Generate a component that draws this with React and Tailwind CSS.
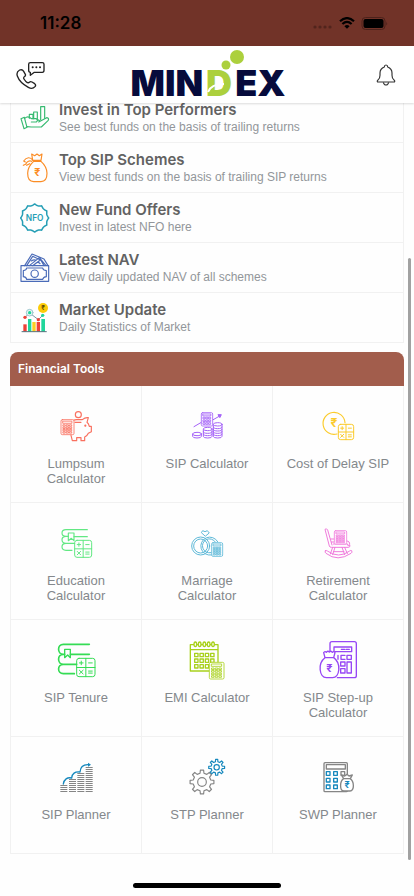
import React from "react";

// small calculator with a display and a 3x4 key grid
function Calc({ x, y, w, h, keys = 4, fill = "white" }) {
    const stepX = w / 4;
    const stepY = (h * 0.62) / keys;
    const dots = [];
    for (let r = 0; r < keys; r++) {
        for (let c = 0; c < 3; c++) {
            dots.push(
                <rect key={r + "-" + c} x={x + stepX * (c + 0.7)} y={y + h * 0.34 + stepY * r} width={stepX * 0.6} height={stepY * 0.6} />
            );
        }
    }
    return (
        <g strokeWidth="2.5">
            <rect x={x} y={y} width={w} height={h} rx="4" fill={fill} />
            <rect x={x + w * 0.16} y={y + h * 0.1} width={w * 0.68} height={h * 0.14} />
            {dots}
        </g>
    );
}

// square pad with + - x = keys
function MathPad({ x, y, s }) {
    const q = s / 4;
    const d = s * 0.1;
    return (
        <g strokeWidth="3">
            <rect x={x} y={y} width={s} height={s} rx="7" />
            <path d={`M${x + 2 * q} ${y}v${s}M${x} ${y + 2 * q}h${s}`} />
            <path d={`M${x + q - d} ${y + q}h${2 * d}M${x + q} ${y + q - d}v${2 * d}M${x + 3 * q - d} ${y + q}h${2 * d}`} />
            <path d={`M${x + q - d} ${y + 3 * q - d}l${2 * d} ${2 * d}m0 ${-2 * d}l${-2 * d} ${2 * d}`} />
            <path d={`M${x + 3 * q - d} ${y + 3 * q - 3}h${2 * d}m0 6h${-2 * d}`} />
        </g>
    );
}

function Rupee({ x, y, size, color }) {
    return (
        <text x={x} y={y} fontSize={size} fill={color || "currentColor"} stroke="none" textAnchor="middle" fontWeight="700" fontFamily="Inter, 'Noto Sans', sans-serif">₹</text>
    );
}

function gearPath(cx, cy, outer, inner, teeth) {
    const step = (Math.PI * 2) / teeth;
    const pts = [];
    for (let i = 0; i < teeth; i++) {
        const a = i * step - Math.PI / 2;
        [[-0.28, inner], [-0.17, outer], [0.17, outer], [0.28, inner]].forEach(([k, r]) => {
            pts.push(`${(cx + r * Math.cos(a + k * step)).toFixed(1)} ${(cy + r * Math.sin(a + k * step)).toFixed(1)}`);
        });
    }
    return "M" + pts.join("L") + "Z";
}

function badgePath(cx, cy, r, waves) {
    const pts = [];
    for (let i = 0; i < 120; i++) {
        const a = (i / 120) * Math.PI * 2;
        const rr = r - 4 * Math.abs(Math.sin((a * waves) / 2));
        pts.push(`${(cx + rr * Math.sin(a)).toFixed(1)} ${(cy - rr * Math.cos(a)).toFixed(1)}`);
    }
    return "M" + pts.join("L") + "Z";
}

const investIcon = (
    <>
        <path d="M28 46V34h11v13M41 47V27h11v22M62 50V11h12v35" />
        <path d="M3 47l10-4 8 30-9 4z" />
        <path d="M14 46c7-6 14-5 20 1h15q7 5 0 10H34M56 57l24-13q9 2 4 9L64 72H34l-13-1M52 50q6 1 8 5" />
    </>
);

const bagIcon = (
    <>
        <path d="M38 22L35 3l9 5 7-5 7 5 8-5-3 19z" />
        <path d="M41 25c-9 8-18 21-18 36 0 16 7 25 18 25h22c11 0 18-9 18-25 0-15-9-28-18-36z" />
        <path d="M38 21c-6-9-18-10-27 3M35 25c-6-4-14 0-18 9l-7 3M11 24l5 3M29 32l-9 5" />
        <Rupee x={52} y={68} size={32} />
    </>
);

const nfoIcon = (
    <>
        <path d={badgePath(44, 45, 42, 12)} strokeWidth="4.5" />
        <text x="44" y="54" fontSize="25" fill="currentColor" stroke="none" textAnchor="middle" fontWeight="600" fontFamily="Inter, sans-serif">NFO</text>
    </>
);

const navIcon = (
    <>
        <rect x="3" y="38" width="83" height="47" />
        <path d="M20 45h48q1 7 11 8v18q-9 1-11 8H20q-1-7-10-8V53q9-1 10-8z" />
        <circle cx="44" cy="62" r="11" />
        <path d="M14 38L36 3l36 15 12 20M20 38l18-28 25 12M28 38l30-24 20 24M38 38l24-18 10 18M34 24q8-6 14-2M48 30q7-4 12 2" />
    </>
);

const marketIcon = (
    <g stroke="none">
        <rect x="10" y="64" width="10" height="22" fill="#ee4136" />
        <rect x="24" y="48" width="10" height="38" fill="#20d69b" />
        <rect x="37" y="57" width="10" height="29" fill="#f9cf23" />
        <rect x="50" y="57" width="10" height="29" fill="#ee4136" />
        <rect x="64" y="48" width="11" height="38" fill="#20d69b" />
        <path d="M6 86h73" stroke="#56707c" strokeWidth="3" />
        <path d="M15 43l14-13 26 20 13-13" stroke="#7d98a5" strokeWidth="3" />
        <circle cx="29" cy="29" r="10" stroke="#9cc6cf" strokeWidth="3" fill="#e7f7f4" />
        <circle cx="29" cy="29" r="5" fill="#20d69b" />
        <circle cx="15" cy="43" r="5" fill="#ee4136" />
        <circle cx="55" cy="50" r="5" fill="#ee4136" />
        <circle cx="68" cy="37" r="5" fill="#20d69b" />
        <circle cx="69" cy="15" r="15" fill="#fccb08" />
        <Rupee x={69} y={22} size={19} color="#614d05" />
    </g>
);

const lumpsumIcon = (
    <>
        <circle cx="67" cy="26" r="9" />
        <path d="M53 43q3-2 9-2h17c7-6 12-7 18-6l-4 14c4 3 6 8 7 12h6v16l-9 5c-2 5-6 9-11 11v11H75v-9H62v9H49l-4-16M57 49h18" />
        <circle cx="88" cy="59" r="1.5" fill="currentColor" />
        <Calc x={15} y={41} w={39} h={45} />
    </>
);

const sipIcon = (
    <g strokeWidth="3">
        <path d="M21 62l22-13M77 42l21-12" />
        <path d="M94 26l9 0-4 8z" fill="currentColor" />
        <Calc x={43} y={20} w={34} h={40} keys={3} />
        <ellipse cx="30" cy="84" rx="13" ry="5" fill="white" />
        <path d="M17 84v7q0 5 13 5t13-5v-7" />
        <path d="M49 70v21q0 5 13 5t13-5V70M49 77q0 5 13 5t13-5M49 84q0 5 13 5t13-5" fill="white" />
        <ellipse cx="62" cy="69" rx="13" ry="5" fill="white" />
        <path d="M79 55v36q0 5 13 5t13-5V55M79 63q0 5 13 5t13-5M79 70q0 5 13 5t13-5M79 77q0 5 13 5t13-5M79 84q0 5 13 5t13-5" fill="white" />
        <ellipse cx="92" cy="55" rx="13" ry="5" fill="white" />
    </g>
);

const delayIcon = (
    <>
        <path d="M57 84A33 33 0 1 1 81 50" />
        <Rupee x={48} y={64} size={36} />
        <MathPad x={61} y={55} s={46} />
    </>
);

const educationIcon = (
    <>
        <path d="M94 20H30c-16 0-16 20 0 20h7M54 41h40M30 40c-16 0-16 21 0 21h26M30 61c-16 0-16 21 0 21h18" />
        <path d="M37 30h17v23l-8-7-9 7z" />
        <MathPad x={56} y={52} s={51} />
    </>
);

const marriageIcon = (
    <g strokeWidth="3">
        <circle cx="41" cy="69" r="27" />
        <circle cx="41" cy="69" r="21" />
        <path d="M73 96A27 27 0 1 1 92 56M72 89A21 21 0 1 1 85 57" />
        <path d="M54 39L43 29l4-6 7 3 7-3 5 6z" />
        <Calc x={74} y={59} w={33} h={41} />
    </g>
);

const retirementIcon = (
    <g strokeWidth="3">
        <path d="M42 66L29 21q-3-6-8-2l13 50q1 4 6 4h50q7 0 6-6l-7 0v-4H46" />
        <path d="M86 54q10 0 9 10M38 48h10M40 57h8" />
        <Calc x={49} y={23} w={37} h={40} />
        <path d="M44 73l-7 20M51 73l-7 22M72 73l8 22M80 73l8 19M46 86h32" />
        <path d="M22 83q-3 5 2 8 35 27 75 0 5-3 2-8-2-2-6 1-33 24-67 0-4-3-6-1z" />
    </g>
);

const tenureIcon = (
    <>
        <path d="M100 13H22c-19 0-19 30 0 30h4M43 43h57M22 43c-19 0-19 30 0 30h40M22 73c-19 0-19 28 0 28h33" strokeWidth="5" />
        <path d="M26 28h17v25l-8-8-9 8z" strokeWidth="4" />
        <MathPad x={62} y={55} s={55} />
    </>
);

const emiIcon = (
    <g strokeWidth="4">
        <path d="M66 93H10V14h83v54M10 29h83" />
        {[25, 38, 52, 65, 78].map((x) => (
            <ellipse key={x} cx={x} cy="13" rx="4" ry="7" fill="white" />
        ))}
        {[40, 57, 74].map((y) =>
            [23, 39, 55, 71].map((x) => <rect key={x + "-" + y} x={x} y={y} width="10" height="10" />)
        )}
        <Calc x={67} y={67} w={44} h={50} />
    </g>
);

const stepUpIcon = (
    <g strokeWidth="4">
        <path d="M36 32V11q0-6 6-6h67q6 0 6 6v96q0 6-6 6H58" />
        <rect x="48" y="21" width="53" height="14" />
        <path d="M70 28h10M84 28h10M60 46v12M81 46H69v12h12" />
        <rect x="87" y="46" width="13" height="12" />
        <rect x="68" y="66" width="13" height="12" />
        <rect x="68" y="86" width="13" height="13" />
        <rect x="87" y="66" width="13" height="33" />
        <path d="M21 53L17 38q4-6 8-1 4-6 9-1 5-5 9 1 5-5 8 1l-4 15z" fill="white" />
        <path d="M21 53C-2 70 4 113 25 113h19c21 0 27-43 3-60z" fill="white" />
        <Rupee x={34} y={97} size={33} />
    </g>
);

const sipPlannerIcon = (
    <>
        {[[13, 84], [39, 67], [64, 48], [89, 30]].map(([x, top]) => {
            const lines = [];
            for (let y = 103.5; y >= top; y -= 6) lines.push(`M${x} ${y}h21`);
            return <path key={x} d={lines.join("")} strokeWidth="3.5" strokeLinecap="butt" />;
        })}
        <path d="M22 81c2-14 12-21 25-18 1-13 10-20 25-18 1-14 10-23 26-22" stroke="#1688bd" strokeWidth="4" />
        <path d="M96 17l9 6-9 6z" stroke="none" fill="#1688bd" />
    </>
);

const stpIcon = (
    <g strokeWidth="3.5">
        <path d={gearPath(45, 75, 36, 27, 8)} />
        <circle cx="45" cy="75" r="13" />
        <g stroke="#1688bd">
            <path d={gearPath(89, 31, 24, 17, 8)} />
            <circle cx="89" cy="31" r="8" />
        </g>
    </g>
);

const swpIcon = (
    <g strokeWidth="4">
        <rect x="18" y="17" width="70" height="87" rx="3" />
        <rect x="25" y="23" width="57" height="13" />
        <g stroke="#1688bd">
            {[44, 64, 84].map((y) =>
                [25, 47].map((x) => <rect key={x + "-" + y} x={x} y={y} width="11" height="11" />)
            )}
        </g>
        <rect x="69" y="44" width="11" height="11" />
        <path d="M77 65l-7-11 10 3 7-5 6 5 10-3-6 11z" fill="white" />
        <path d="M77 65C65 72 64 102 78 102h18c14 0 13-30 0-37z" fill="white" />
        <Rupee x={87} y={94} size={27} color="#1688bd" />
    </g>
);

const menu = [
    { title: "Invest in Top Performers", text: "See best funds on the basis of trailing returns", color: "text-[#36ba70]", icon: investIcon },
    { title: "Top SIP Schemes", text: "View best funds on the basis of trailing SIP returns", color: "text-[#fb8c24]", icon: bagIcon },
    { title: "New Fund Offers", text: "Invest in latest NFO here", color: "text-[#259eb5]", icon: nfoIcon },
    { title: "Latest NAV", text: "View daily updated NAV of all schemes", color: "text-[#4a6bb8]", icon: navIcon },
    { title: "Market Update", text: "Daily Statistics of Market", color: "text-[#56707c]", icon: marketIcon },
];

const tools = [
    { label: "Lumpsum Calculator", color: "text-[#f9705f]", icon: lumpsumIcon },
    { label: "SIP Calculator", color: "text-[#a461f8]", icon: sipIcon },
    { label: "Cost of Delay SIP", color: "text-[#fbcb2c]", icon: delayIcon },
    { label: "Education Calculator", color: "text-[#62e883]", icon: educationIcon },
    { label: "Marriage Calculator", color: "text-[#5eb9d8]", icon: marriageIcon },
    { label: "Retirement Calculator", color: "text-[#f07bdc]", icon: retirementIcon },
    { label: "SIP Tenure", color: "text-[#35dc55]", icon: tenureIcon },
    { label: "EMI Calculator", color: "text-[#a8d11c]", icon: emiIcon },
    { label: "SIP Step-up Calculator", color: "text-[#9747f5]", icon: stepUpIcon },
    { label: "SIP Planner", color: "text-[#858585]", icon: sipPlannerIcon },
    { label: "STP Planner", color: "text-[#858585]", icon: stpIcon },
    { label: "SWP Planner", color: "text-[#858585]", icon: swpIcon },
];

function StatusBar() {
    return (
        <div className="flex h-[46px] items-center justify-between bg-[#713328] pl-10 pr-[26px] text-black">
            <span className="text-[17px] leading-5 font-semibold">11:28</span>
            <div className="flex items-center gap-1.5">
                <svg width="20" height="12" viewBox="0 0 20 12" fill="#51241c">
                    <circle cx="2" cy="10" r="1.6" />
                    <circle cx="7" cy="10" r="1.6" />
                    <circle cx="12" cy="10" r="1.6" />
                    <circle cx="17" cy="10" r="1.6" />
                </svg>
                <svg width="16" height="12" viewBox="0 0 16 12" fill="none" stroke="black" strokeWidth="2.2">
                    <path d="M1 4.3q7-6.4 14 0M3.4 7q4.6-4.2 9.2 0" />
                    <path d="M8 11.8L5.4 9.2q2.6-2.2 5.2 0z" fill="black" stroke="none" />
                </svg>
                <svg width="27" height="13" viewBox="0 0 27 13" fill="none">
                    <rect x="1" y="0.5" width="23" height="12" rx="3.5" stroke="#4c221b" />
                    <rect x="2.5" y="2" width="20" height="9" rx="2" fill="black" />
                    <path d="M25.3 4.5q1.6 2 0 4z" fill="#4c221b" />
                </svg>
            </div>
        </div>
    );
}

function Logo() {
    return (
        <div className="relative flex gap-[3px] pt-4 text-[36px] leading-9 font-black text-[#060b3c]">
            <span>MIN</span>
            <span className="text-[#acd03d]">D</span>
            <span>EX</span>
            {/* bubbles rising from the D */}
            <svg width="24" height="22" viewBox="0 0 24 22" fill="#acd03d" className="absolute top-0 left-[90px]">
                <circle cx="16" cy="8" r="7" />
                <circle cx="5" cy="16" r="4.5" />
            </svg>
            <svg width="18" height="12" viewBox="0 0 18 12" fill="none" stroke="white" strokeWidth="2" className="absolute bottom-2 left-[76px]">
                <path d="M1 11q3-8 16-8" />
            </svg>
        </div>
    );
}

function Header() {
    return (
        <header className="relative z-10 flex h-[57px] items-center justify-between bg-white pr-[13px] pl-[15px] shadow-[0_1px_2px_rgba(0,0,0,0.14)]">
            <button type="button" aria-label="Contact" className="text-[#222]">
                <svg width="30" height="30" viewBox="0 0 90 90" fill="none" stroke="currentColor" strokeWidth="4" strokeLinejoin="round">
                    <path d="M14 30q8-3 12 4l5 9q2 5-4 8-2 3 0 6 5 8 10 11 4 1 6-1 3-4 8-1l8 5q5 4 1 9-8 9-20 2Q14 68 7 48 3 36 14 30z" />
                    <path d="M46 8h36q5 0 5 5v18q0 6-5 6H58L46 46v-9q-5 0-5-6V13q0-5 5-5z" />
                    <path d="M53 22h.1M64 22h.1M75 22h.1" strokeWidth="6" strokeLinecap="round" />
                </svg>
            </button>
            <Logo />
            <button type="button" aria-label="Notifications" className="flex w-[30px] justify-center text-[#333]">
                <svg width="24" height="24" viewBox="0 0 72 72" fill="none" stroke="currentColor" strokeWidth="3.5" strokeLinejoin="round">
                    <path d="M11 57q-3-3 1-6 6-4 6-14v-7q0-13 13-18 0-6 5-6t5 6q13 5 13 18v7q0 10 6 14 4 3 1 6z" />
                    <path d="M28 58q2 8 8 8t8-8" />
                </svg>
            </button>
        </header>
    );
}

export default function App() {
    return (
        <div className="relative min-h-screen overflow-hidden bg-[#fefefe] font-[Inter,sans-serif]">
            <StatusBar />
            <Header />

            <main className="px-2.5">
                {/* the list is scrolled a little under the header */}
                <nav className="-mt-2.5 border-x border-[#f1f1f1]">
                    {menu.map((item) => (
                        <a key={item.title} href="#" className="flex h-[50px] gap-[9px] border-b border-[#f1f1f1] pl-[9px]">
                            <svg width="30" height="30" viewBox="0 0 90 90" fill="none" stroke="currentColor" strokeWidth="3.5" strokeLinecap="round" strokeLinejoin="round" className={"mt-2.5 shrink-0 " + item.color}>
                                {item.icon}
                            </svg>
                            <div className="pt-2">
                                <h3 className="text-[15px] leading-[18px] font-semibold text-[#626262]">{item.title}</h3>
                                <p className="font-['Liberation_Sans',sans-serif] text-xs leading-4 text-[#92969a]">{item.text}</p>
                            </div>
                        </a>
                    ))}
                </nav>

                <section className="mt-[9px]">
                    <h2 className="rounded-t-lg bg-[#a25d4c] px-2 py-2 text-xs leading-[18px] font-semibold text-white">
                        Financial Tools
                    </h2>
                    <div className="grid grid-cols-3 border-l border-[#f1f1f1]">
                        {tools.map((tool) => (
                            <a key={tool.label} href="#" className="flex h-[117px] flex-col items-center gap-2.5 border-r border-b border-[#f1f1f1] px-3 pt-5 text-center">
                                <svg width="40" height="40" viewBox="0 0 120 120" fill="none" stroke="currentColor" strokeWidth="3.5" strokeLinecap="round" strokeLinejoin="round" className={"shrink-0 " + tool.color}>
                                    {tool.icon}
                                </svg>
                                <span className="font-['Liberation_Sans',sans-serif] text-[13px] leading-[15px] text-[#84888c]">{tool.label}</span>
                            </a>
                        ))}
                    </div>
                </section>
            </main>

            <footer className="flex justify-center pt-[29px] pb-2">
                <div className="h-[5px] w-[148px] rounded-full bg-black"></div>
            </footer>

            {/* scroll thumb */}
            <div className="absolute top-[258px] right-[3px] bottom-9 w-[3px] rounded-full bg-[#a1a1a1]"></div>
        </div>
    );
}
